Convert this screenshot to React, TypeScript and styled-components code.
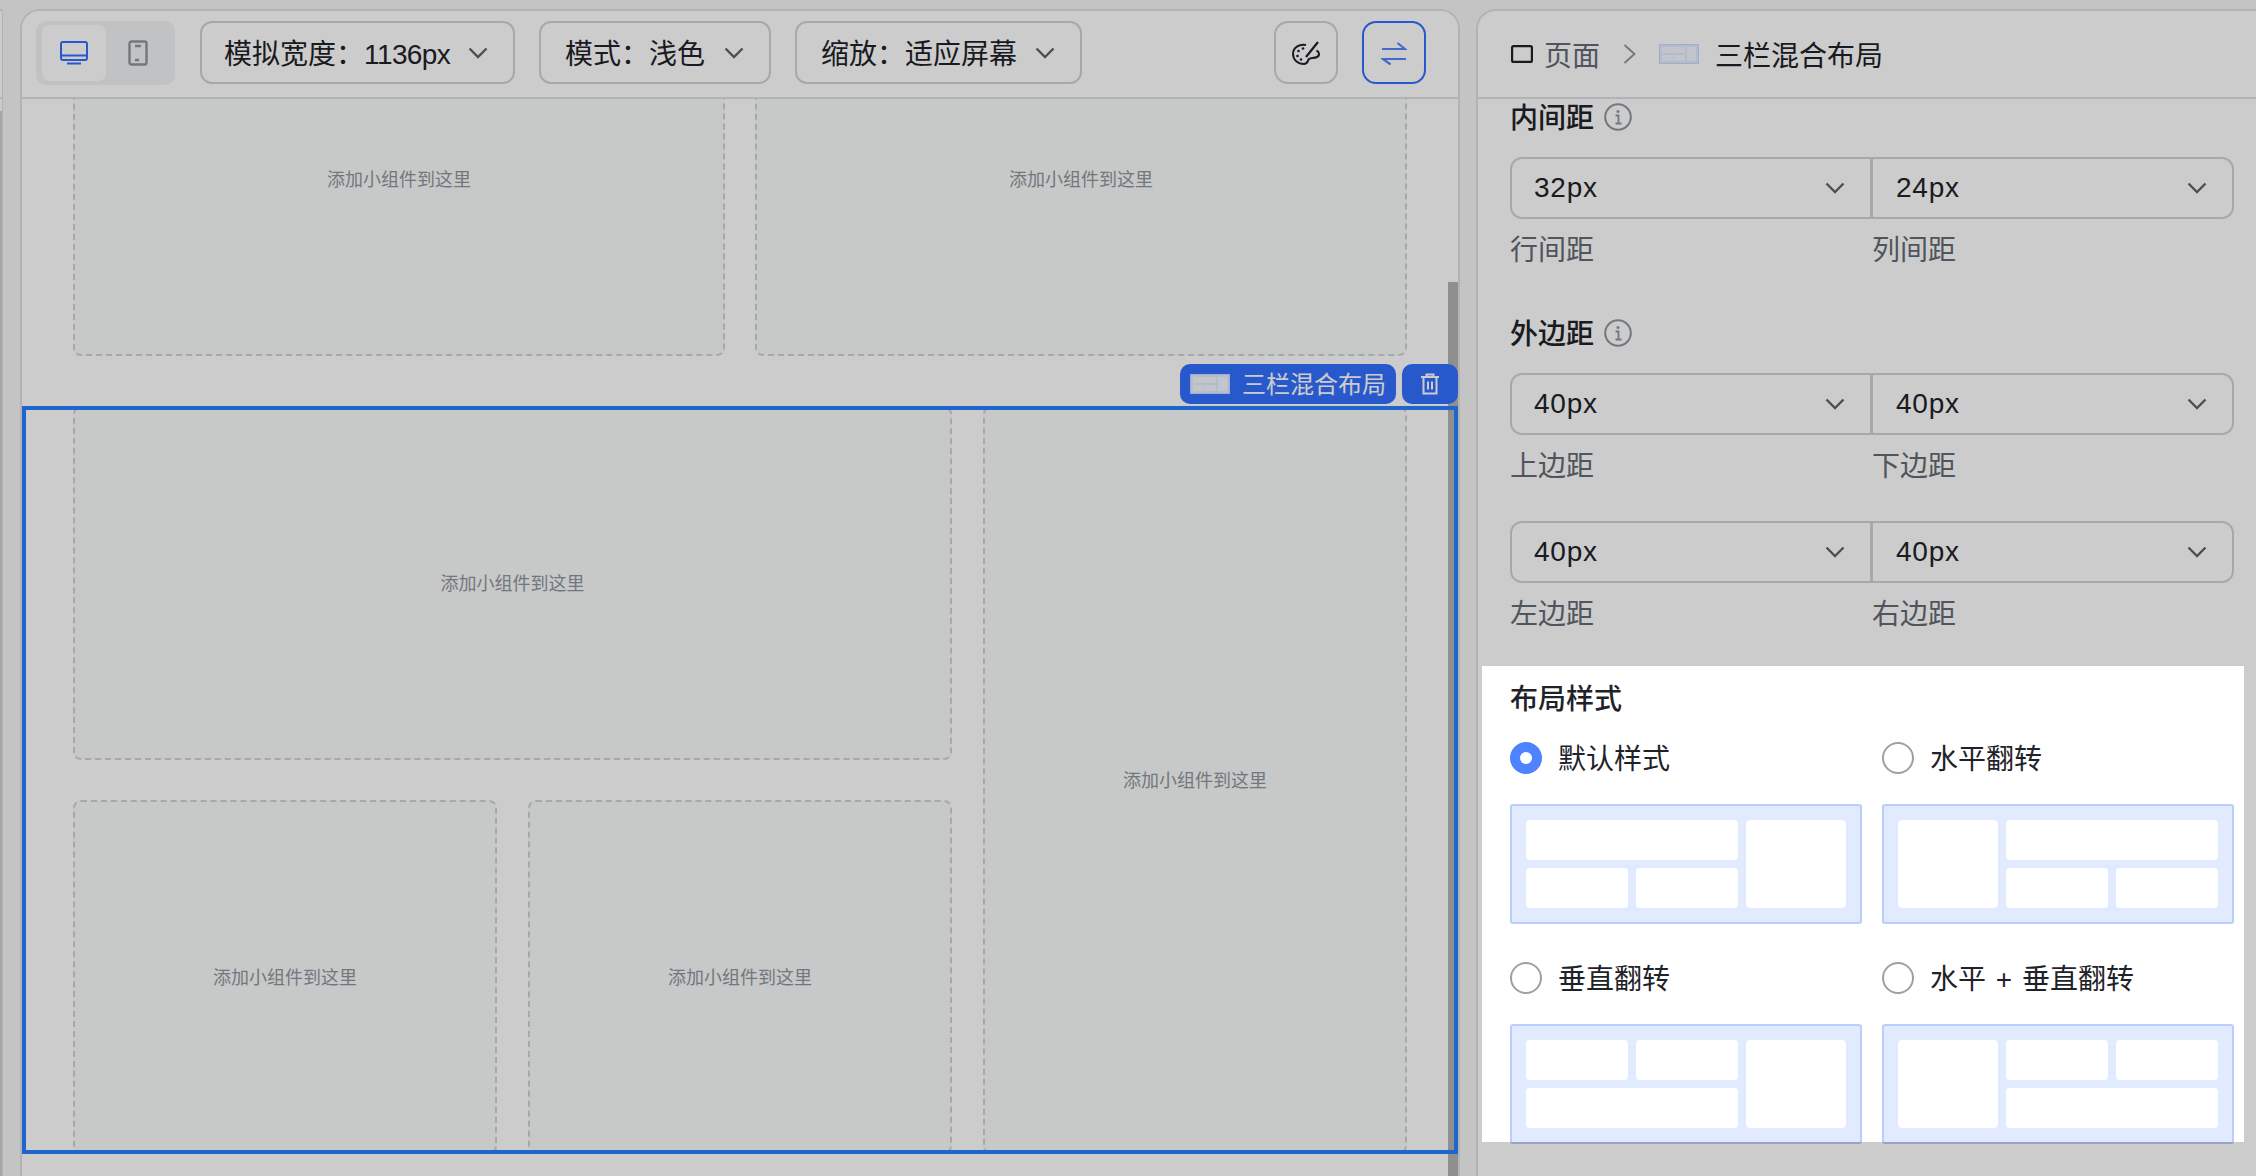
import React from 'react';
import styled, { createGlobalStyle } from 'styled-components';

const GlobalStyle = createGlobalStyle`
  html, body {
    margin: 0;
    height: 100%;
    overflow: hidden;
  }
  body {
    font-family: "Liberation Sans", "Noto Sans CJK SC", sans-serif;
    font-size: 28px;
    color: #1f2329;
  }
  * {
    box-sizing: border-box;
  }
`;

const Page = styled.div`
  display: flex;
  width: 2256px;
  height: 1176px;
  padding-top: 9px;
  background: #f5f6f7;
  overflow: hidden;
`;

const Sliver = styled.div`
  position: relative;
  width: 3px;
  flex: none;
  background: #fff;
  border-right: 1px solid #dee0e3;
  border-top: 2px solid #dee0e3;
  border-top-right-radius: 8px;
`;

const SliverHead = styled.div`
  height: 88px;
  border-bottom: 2px solid #dee0e3;
`;

const SliverThumb = styled.div`
  position: absolute;
  left: 0;
  top: 100px;
  bottom: 0;
  width: 2px;
  background: #d0d0d0;
`;

const EditorPanel = styled.main`
  display: flex;
  flex-direction: column;
  flex: none;
  width: 1440px;
  margin-left: 17px;
  background: #fff;
  border: 2px solid #dee0e3;
  border-bottom: none;
  border-radius: 20px 20px 0 0;
`;

const Toolbar = styled.div`
  position: relative;
  z-index: 2;
  display: flex;
  align-items: flex-start;
  flex: none;
  height: 88px;
  padding: 10px 32px 0 14px;
  background: #fff;
  border-bottom: 2px solid #dee0e3;
  border-radius: 18px 18px 0 0;
`;

const DeviceSwitch = styled.div`
  display: flex;
  width: 139px;
  height: 64px;
  padding: 4px 5px 4px 6px;
  margin-right: 25px;
  background: #f2f3f5;
  border-radius: 10px;
`;

const DeviceButton = styled.div<{ $active?: boolean }>`
  display: flex;
  align-items: center;
  justify-content: center;
  width: 64px;
  background: ${({ $active }) => ($active ? '#fff' : 'transparent')};
  border-radius: 8px;
`;

const ToolSelect = styled.div<{ $width: number; $inset: number }>`
  display: flex;
  align-items: center;
  justify-content: space-between;
  width: ${({ $width }) => $width}px;
  height: 63px;
  padding: 0 25px 0 ${({ $inset }) => $inset}px;
  margin-right: 24px;
  background: #fff;
  border: 2px solid #d0d3d6;
  border-radius: 12px;
  white-space: nowrap;
`;

const ToolSelectText = styled.span`
  margin-top: -2px;
`;

const TightLatin = styled.span`
  letter-spacing: -0.6px;
`;

const ToolButton = styled.div<{ $active?: boolean; $push?: boolean }>`
  display: flex;
  align-items: center;
  justify-content: center;
  width: 64px;
  height: 63px;
  margin-left: ${({ $push }) => ($push ? 'auto' : '24px')};
  border: 2px solid ${({ $active }) => ($active ? '#3370ff' : '#d0d3d6')};
  border-radius: 14px;
`;

const Canvas = styled.div`
  position: relative;
  flex: 1;
  overflow: hidden;
  isolation: isolate;
`;

const ScrollContent = styled.div`
  margin-top: -97px;
`;

const CanvasThumb = styled.div`
  position: absolute;
  top: 183px;
  right: 0;
  bottom: 0;
  width: 10px;
  background: #b3b3b3;
`;

const TopRow = styled.div`
  display: grid;
  grid-template-columns: 1fr 1fr;
  grid-auto-rows: 354px;
  column-gap: 30px;
  padding: 0 51px;
`;

const SelectedBlock = styled.section`
  position: relative;
  display: grid;
  grid-template-columns: repeat(3, 1fr);
  grid-template-rows: 354px 354px;
  gap: 40px 31px;
  padding: 0 51px;
  margin-top: 50px;

  &::after {
    content: '';
    position: absolute;
    inset: 0;
    z-index: 2;
    border: 4px solid #2680ff;
    pointer-events: none;
  }
`;

const DropZone = styled.div<{ $area?: string }>`
  display: flex;
  align-items: center;
  justify-content: center;
  grid-area: ${({ $area }) => $area ?? 'auto'};
  padding-bottom: 2px;
  background: #f9fbfa;
  border: 2px dashed #d0d3d6;
  border-radius: 8px;
  font-size: 18px;
  color: #8f959e;
`;

const BlockActions = styled.div`
  position: absolute;
  right: 0;
  bottom: calc(100% + 2px);
  z-index: 3;
  display: flex;
  gap: 6px;
`;

const BlockTag = styled.div`
  display: flex;
  align-items: center;
  gap: 12px;
  width: 216px;
  height: 40px;
  padding-left: 10px;
  background: #3370ff;
  border-radius: 10px;
  font-size: 24px;
  color: #fff;
  white-space: nowrap;
`;

const BlockTagLabel = styled.span`
  margin-top: -4px;
`;

const BlockDelete = styled.div`
  display: flex;
  align-items: center;
  justify-content: center;
  width: 56px;
  height: 40px;
  background: #3370ff;
  border-radius: 10px;
`;

const SettingsPanel = styled.aside`
  flex: none;
  width: 780px;
  margin-left: 16px;
  background: #fff;
  border-left: 2px solid #dee0e3;
  border-top: 2px solid #dee0e3;
  border-top-left-radius: 20px;
`;

const Breadcrumb = styled.div`
  display: flex;
  align-items: center;
  height: 88px;
  padding: 0 0 0 33px;
  border-bottom: 2px solid #dee0e3;
`;

const CrumbPage = styled.span`
  margin-left: 11px;
  color: #646a73;
`;

const CrumbSeparator = styled.span`
  display: flex;
  margin: 0 23px 0 23px;
`;

const CrumbCurrent = styled.span`
  margin-left: 16px;
`;

const SettingsBody = styled.div`
  padding-left: 32px;
`;

const SectionTitle = styled.h3<{ $gap?: number }>`
  display: flex;
  align-items: center;
  gap: 10px;
  height: 36px;
  margin: ${({ $gap }) => $gap ?? 0}px 0 22px;
  font-size: 28px;
  line-height: 36px;
  font-weight: 500;
`;

const SectionTitleText = styled.span`
  padding-top: 4px;
`;

const SelectPair = styled.div<{ $gap?: number }>`
  display: grid;
  grid-template-columns: 361px 1fr;
  width: 724px;
  height: 62px;
  margin-top: ${({ $gap }) => $gap ?? 0}px;
  border: 2px solid #d0d3d6;
  border-radius: 12px;
`;

const PairCell = styled.div<{ $first?: boolean }>`
  display: flex;
  align-items: center;
  justify-content: space-between;
  padding: 0 25px 0 ${({ $first }) => ($first ? 22 : 23)}px;
  border-right: ${({ $first }) => ($first ? '3px solid #d0d3d6' : 'none')};
  letter-spacing: 0.8px;
`;

const PairLabels = styled.div`
  display: grid;
  grid-template-columns: 362px 1fr;
  height: 36px;
  margin-top: 13px;
  line-height: 38px;
  color: #646a73;
`;

const StyleSection = styled.section`
  position: relative;
  z-index: 10;
  width: 762px;
  height: 476px;
  padding: 14px 0 0 28px;
  margin: 34px 0 0 -28px;
  background: #fff;

  &::after {
    content: '';
    position: absolute;
    inset: 0;
    box-shadow: 0 0 0 3000px rgba(0, 0, 0, 0.2);
    pointer-events: none;
  }
`;

const StyleTitle = styled.div`
  height: 36px;
  line-height: 40px;
  font-weight: 500;
`;

const StyleGrid = styled.div`
  display: grid;
  grid-template-columns: 352px 352px;
  column-gap: 20px;
  row-gap: 38px;
  margin-top: 26px;
`;

const StyleOption = styled.div`
  display: flex;
  flex-direction: column;
  gap: 30px;
`;

const RadioRow = styled.div`
  display: flex;
  align-items: center;
  gap: 16px;
  height: 32px;
  white-space: pre;
`;

const RadioLabel = styled.span`
  margin-top: -2px;
  word-spacing: 2px;
`;

const RadioMark = styled.span<{ $checked?: boolean }>`
  display: flex;
  align-items: center;
  justify-content: center;
  flex: none;
  width: 32px;
  height: 32px;
  background: ${({ $checked }) => ($checked ? '#4e83fd' : '#fff')};
  border: 2px solid ${({ $checked }) => ($checked ? '#4e83fd' : '#9ca0a8')};
  border-radius: 50%;

  &::after {
    content: '';
    display: ${({ $checked }) => ($checked ? 'block' : 'none')};
    width: 12px;
    height: 12px;
    background: #fff;
    border-radius: 50%;
  }
`;

const LayoutCard = styled.div<{ $areas: string; $columns: string }>`
  display: grid;
  grid-template-columns: ${({ $columns }) => $columns};
  grid-template-rows: 40px 40px;
  grid-template-areas: ${({ $areas }) => $areas};
  gap: 8px;
  height: 120px;
  padding: 14px;
  background: #e1eaff;
  border: 2px solid #bacefd;
  border-radius: 3px;
`;

const LayoutCell = styled.div<{ $area: string }>`
  grid-area: ${({ $area }) => $area};
  background: #fff;
  border-radius: 4px;
`;

const Chevron = () => (
  <svg width="20" height="12" viewBox="0 0 20 12" fill="none" stroke="#606468" strokeWidth="2.4">
    <path d="M1.500 1.500l8.500 8.500 8.500-8.500" />
  </svg>
);

const MonitorIcon = () => (
  <svg width="28" height="24" viewBox="0 0 28 24" fill="none" stroke="#3370ff" strokeWidth="2">
    <rect x="1" y="1" width="26" height="18" rx="2" />
    <path d="M1 14.500h26M7 22.500h14" />
  </svg>
);

const PhoneIcon = () => (
  <svg width="20" height="26" viewBox="0 0 20 26" fill="none" stroke="#8f959e" strokeWidth="2.4">
    <rect x="1.500" y="1.500" width="17" height="23" rx="2" />
    <path d="M7 6h6M7 20h4" />
  </svg>
);

const PaletteIcon = () => (
  <svg width="30" height="26" viewBox="0 0 30 26" fill="none" stroke="#1f2329" strokeWidth="2">
    <path d="M15 5C8 3.500 2 8 2 14c0 6 5 10 11 10 4 0 3.500-3.500 5-5 1.500-1.500 5-.5 8-2 3-1.500 2.500-5-.5-6.500" />
    <path d="M27 2 15 17" strokeWidth="2.2" />
    <circle cx="7.500" cy="11" r="1.300" fill="#1f2329" stroke="none" />
    <circle cx="12" cy="8.500" r="1.300" fill="#1f2329" stroke="none" />
    <circle cx="6.500" cy="16" r="1.300" fill="#1f2329" stroke="none" />
    <circle cx="10" cy="19.500" r="1.300" fill="#1f2329" stroke="none" />
  </svg>
);

const SwapIcon = () => (
  <svg width="26" height="24" viewBox="0 0 26 24" fill="none" stroke="#5585ff" strokeWidth="2.2">
    <path d="M1 8h23l-7.500-6" />
    <path d="M25 18H2l7.500 5.500" />
  </svg>
);

const PageIcon = () => (
  <svg width="22" height="18" viewBox="0 0 22 18" fill="none" stroke="#1f2329" strokeWidth="2.200">
    <rect x="1.100" y="1.100" width="19.800" height="15.800" rx="1.500" />
  </svg>
);

const CrumbChevron = () => (
  <svg width="13" height="20" viewBox="0 0 13 20" fill="none" stroke="#8f959e" strokeWidth="1.800">
    <path d="M1.500 1l10 9-10 9" />
  </svg>
);

const LayoutGlyph = () => (
  <svg width="40" height="20" viewBox="0 0 40 20">
    <rect x="0.500" y="0.500" width="39" height="19" fill="#e1eaff" stroke="#c9d8fe" />
    <rect x="3" y="3" width="23" height="6" fill="#f4f7ff" />
    <rect x="3" y="11" width="11" height="6" fill="#f4f7ff" />
    <rect x="15" y="11" width="11" height="6" fill="#f4f7ff" />
    <rect x="28" y="3" width="9" height="14" fill="#f4f7ff" />
  </svg>
);

const TrashIcon = () => (
  <svg width="20" height="22" viewBox="0 0 20 22" fill="none" stroke="#fff" strokeWidth="2">
    <path d="M1 4h18M6.500 4V1.500h7V4M3.500 4v16.500h13V4M8 8.500v8M12 8.500v8" />
  </svg>
);

const InfoIcon = () => (
  <svg width="28" height="28" viewBox="0 0 28 28" fill="none" stroke="#8f959e" strokeWidth="2">
    <circle cx="14" cy="14" r="12.800" />
    <path d="M11.500 12.500H14.500V20M11.500 20.500h6" strokeWidth="1.800" />
    <circle cx="14" cy="8.500" r="1.500" fill="#8f959e" stroke="none" />
  </svg>
);

const DROP_TEXT = '添加小组件到这里';

const spacingGroups = [
  { values: ['32px', '24px'], labels: ['行间距', '列间距'], gap: 0 },
  { title: '外边距', values: ['40px', '40px'], labels: ['上边距', '下边距'], gap: 0, titleGap: 47 },
  { values: ['40px', '40px'], labels: ['左边距', '右边距'], gap: 37 },
];

const layoutOptions = [
  {
    label: '默认样式',
    checked: true,
    columns: '102px 102px 100px',
    areas: `"a a s" "b c s"`,
  },
  {
    label: '水平翻转',
    columns: '100px 102px 102px',
    areas: `"s a a" "s b c"`,
  },
  {
    label: '垂直翻转',
    columns: '102px 102px 100px',
    areas: `"b c s" "a a s"`,
  },
  {
    label: '水平 + 垂直翻转',
    columns: '100px 102px 102px',
    areas: `"s b c" "s a a"`,
  },
];

const App: React.FC = () => {
  return (
    <Page>
      <GlobalStyle />
      <Sliver>
        <SliverHead />
        <SliverThumb />
      </Sliver>

      <EditorPanel>
        <Toolbar>
          <DeviceSwitch>
            <DeviceButton $active>
              <MonitorIcon />
            </DeviceButton>
            <DeviceButton>
              <PhoneIcon />
            </DeviceButton>
          </DeviceSwitch>
          <ToolSelect $width={315} $inset={22}>
            <ToolSelectText>
              模拟宽度：<TightLatin>1136px</TightLatin>
            </ToolSelectText>
            <Chevron />
          </ToolSelect>
          <ToolSelect $width={232} $inset={24}>
            <ToolSelectText>模式：浅色</ToolSelectText>
            <Chevron />
          </ToolSelect>
          <ToolSelect $width={287} $inset={24}>
            <ToolSelectText>缩放：适应屏幕</ToolSelectText>
            <Chevron />
          </ToolSelect>
          <ToolButton $push>
            <PaletteIcon />
          </ToolButton>
          <ToolButton $active>
            <SwapIcon />
          </ToolButton>
        </Toolbar>

        <Canvas>
          <ScrollContent>
            <TopRow>
              <DropZone>{DROP_TEXT}</DropZone>
              <DropZone>{DROP_TEXT}</DropZone>
            </TopRow>
            <SelectedBlock>
              <BlockActions>
                <BlockTag>
                  <LayoutGlyph />
                  <BlockTagLabel>三栏混合布局</BlockTagLabel>
                </BlockTag>
                <BlockDelete>
                  <TrashIcon />
                </BlockDelete>
              </BlockActions>
              <DropZone $area="1 / 1 / 2 / 3">{DROP_TEXT}</DropZone>
              <DropZone $area="1 / 3 / 3 / 4">{DROP_TEXT}</DropZone>
              <DropZone $area="2 / 1 / 3 / 2">{DROP_TEXT}</DropZone>
              <DropZone $area="2 / 2 / 3 / 3">{DROP_TEXT}</DropZone>
            </SelectedBlock>
          </ScrollContent>
          <CanvasThumb />
        </Canvas>
      </EditorPanel>

      <SettingsPanel>
        <Breadcrumb>
          <PageIcon />
          <CrumbPage>页面</CrumbPage>
          <CrumbSeparator>
            <CrumbChevron />
          </CrumbSeparator>
          <LayoutGlyph />
          <CrumbCurrent>三栏混合布局</CrumbCurrent>
        </Breadcrumb>

        <SettingsBody>
          <SectionTitle>
            <SectionTitleText>内间距</SectionTitleText>
            <InfoIcon />
          </SectionTitle>
          {spacingGroups.map((group, index) => (
            <React.Fragment key={index}>
              {group.title && (
                <SectionTitle $gap={group.titleGap}>
                  <SectionTitleText>{group.title}</SectionTitleText>
                  <InfoIcon />
                </SectionTitle>
              )}
              <SelectPair $gap={group.gap}>
                <PairCell $first>
                  {group.values[0]}
                  <Chevron />
                </PairCell>
                <PairCell>
                  {group.values[1]}
                  <Chevron />
                </PairCell>
              </SelectPair>
              <PairLabels>
                <span>{group.labels[0]}</span>
                <span>{group.labels[1]}</span>
              </PairLabels>
            </React.Fragment>
          ))}

          <StyleSection>
            <StyleTitle>布局样式</StyleTitle>
            <StyleGrid>
              {layoutOptions.map((option) => (
                <StyleOption key={option.label}>
                  <RadioRow>
                    <RadioMark $checked={option.checked} />
                    <RadioLabel>{option.label}</RadioLabel>
                  </RadioRow>
                  <LayoutCard $areas={option.areas} $columns={option.columns}>
                    <LayoutCell $area="a" />
                    <LayoutCell $area="b" />
                    <LayoutCell $area="c" />
                    <LayoutCell $area="s" />
                  </LayoutCard>
                </StyleOption>
              ))}
            </StyleGrid>
          </StyleSection>
        </SettingsBody>
      </SettingsPanel>
    </Page>
  );
};

export default App;
